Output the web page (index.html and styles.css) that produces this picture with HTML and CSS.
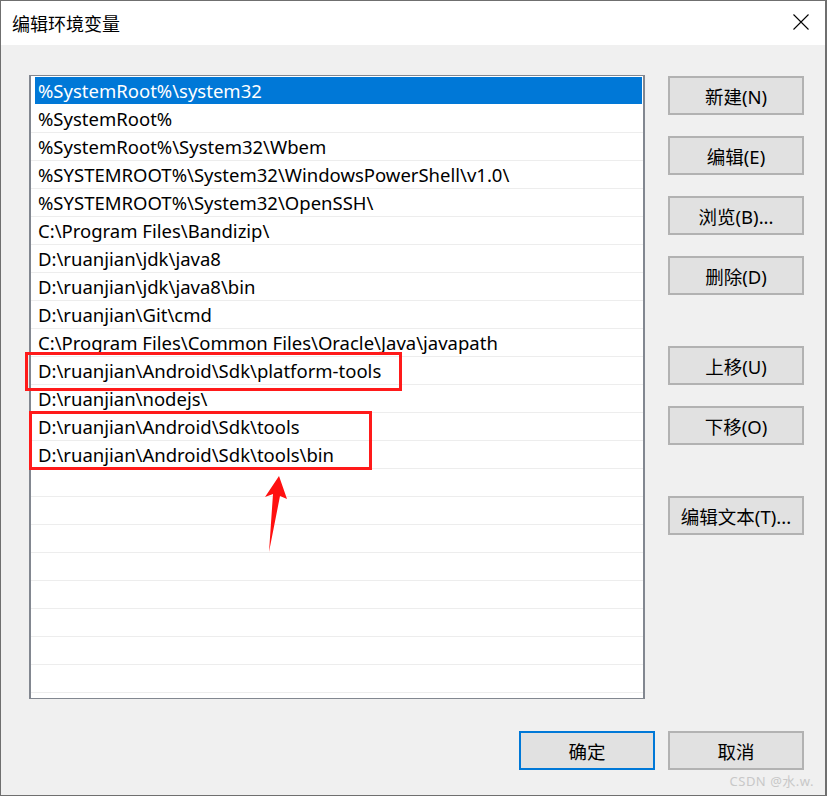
FILE: index.html
```html
<!DOCTYPE html>
<html lang="zh-CN">
<head>
<meta charset="utf-8">
<title>编辑环境变量</title>
<link rel="stylesheet" href="styles.css">
</head>
<body>
<div class="window">
  <div class="titlebar">
    <span class="title">编辑环境变量</span>
    <svg class="close" width="16" height="16" viewBox="0 0 16 16"><path d="M0.5 0.5 L15.5 15.5 M15.5 0.5 L0.5 15.5" stroke="#000" stroke-width="1.1" fill="none"/></svg>
  </div>
  <div class="client">
    <div class="main">
      <div class="listbox">
        <div class="row sel"><div class="cell">%SystemRoot%\system32</div></div>
        <div class="row"><div class="cell">%SystemRoot%</div></div>
        <div class="row"><div class="cell">%SystemRoot%\System32\Wbem</div></div>
        <div class="row"><div class="cell">%SYSTEMROOT%\System32\WindowsPowerShell\v1.0\</div></div>
        <div class="row"><div class="cell">%SYSTEMROOT%\System32\OpenSSH\</div></div>
        <div class="row"><div class="cell">C:\Program Files\Bandizip\</div></div>
        <div class="row"><div class="cell">D:\ruanjian\jdk\java8</div></div>
        <div class="row"><div class="cell">D:\ruanjian\jdk\java8\bin</div></div>
        <div class="row"><div class="cell">D:\ruanjian\Git\cmd</div></div>
        <div class="row"><div class="cell">C:\Program Files\Common Files\Oracle\Java\javapath</div></div>
        <div class="row"><div class="cell">D:\ruanjian\Android\Sdk\platform-tools</div></div>
        <div class="row"><div class="cell">D:\ruanjian\nodejs\</div></div>
        <div class="row"><div class="cell">D:\ruanjian\Android\Sdk\tools</div></div>
        <div class="row"><div class="cell">D:\ruanjian\Android\Sdk\tools\bin</div></div>
        <div class="row"><div class="cell"></div></div>
        <div class="row"><div class="cell"></div></div>
        <div class="row"><div class="cell"></div></div>
        <div class="row"><div class="cell"></div></div>
        <div class="row"><div class="cell"></div></div>
        <div class="row"><div class="cell"></div></div>
        <div class="row"><div class="cell"></div></div>
        <div class="row"><div class="cell"></div></div>
        <div class="row"><div class="cell"></div></div>
      </div>
      <div class="side">
        <div class="group">
          <button class="btn">新建(N)</button>
          <button class="btn">编辑(E)</button>
          <button class="btn">浏览(B)...</button>
          <button class="btn">删除(D)</button>
        </div>
        <div class="group">
          <button class="btn">上移(U)</button>
          <button class="btn">下移(O)</button>
        </div>
        <div class="group">
          <button class="btn">编辑文本(T)...</button>
        </div>
      </div>
    </div>
    <div class="footer">
      <button class="btn default">确定</button>
      <button class="btn">取消</button>
    </div>
  </div>
  <div class="mark mark1"></div>
  <div class="mark mark2"></div>
  <svg class="arrow" width="30" height="80" viewBox="0 0 30 80"><polygon points="15,0 23,23 16,20 5,76 9,18 1,21" fill="#ff1010"/></svg>
  <div class="watermark">CSDN @水.w.</div>
</div>
</body>
</html>
```
FILE: styles.css
```css
html, body {
  margin: 0;
  padding: 0;
}
body {
  width: 827px;
  height: 796px;
  overflow: hidden;
  font-family: "Noto Sans", "Noto Sans CJK SC", sans-serif;
  font-size: 18.5px;
  color: #000;
}
.window {
  position: relative;
  box-sizing: border-box;
  width: 827px;
  height: 796px;
  border: 1px solid #6f6f6f;
  border-right-width: 2px;
  background: #f0f0f0;
  display: flex;
  flex-direction: column;
}
.titlebar {
  height: 44px;
  background: #fff;
  display: flex;
  align-items: center;
  justify-content: space-between;
  padding: 0 16px 0 11px;
}
.title {
  font-family: "Noto Sans CJK SC", sans-serif;
  font-size: 18px;
  line-height: 20px;
  margin-top: -1px;
}
.close {
  display: block;
  margin-top: -2px;
}
.client {
  flex: 1;
  display: flex;
  flex-direction: column;
  padding: 30px 21px 0 28px;
}
.main {
  display: flex;
  gap: 23px;
}
.listbox {
  box-sizing: border-box;
  width: 616px;
  height: 624px;
  border: 2px solid #828790;
  border-top-width: 1px;
  border-bottom-width: 1px;
  background: #fff;
  overflow: hidden;
  padding-top: 1px;
}
.row {
  height: 27px;
  border-bottom: 1px solid #ededed;
}
.cell {
  height: 27px;
  margin: 0 1px 0 4px;
  padding-left: 3px;
  line-height: 27px;
  white-space: nowrap;
  overflow: hidden;
}
.row.sel .cell {
  background: #0078d7;
  color: #fff;
}
.row.sel {
  border-bottom-color: #fff;
}
.side {
  display: flex;
  flex-direction: column;
  gap: 51px;
  padding-top: 1px;
}
.group {
  display: flex;
  flex-direction: column;
  gap: 21px;
}
.btn {
  box-sizing: border-box;
  width: 136px;
  height: 39px;
  background: #e1e1e1;
  border: 2px solid #b2b2b2;
  font-family: "Noto Sans", "Noto Sans CJK SC", sans-serif;
  font-size: 18.5px;
  color: #000;
  padding: 0;
  display: flex;
  align-items: center;
  justify-content: center;
}
.btn.default {
  border-color: #0078d7;
}
.footer {
  display: flex;
  justify-content: flex-end;
  gap: 13px;
  margin-top: 32px;
}
.mark {
  position: absolute;
  box-sizing: border-box;
  border: 3px solid #ff1a1a;
}
.mark1 {
  left: 24px;
  top: 351px;
  width: 377px;
  height: 39px;
}
.mark2 {
  left: 28px;
  top: 410px;
  width: 343px;
  height: 59px;
}
.arrow {
  position: absolute;
  left: 263px;
  top: 475px;
}
.watermark {
  position: absolute;
  right: 11px;
  bottom: 5px;
  font-family: "Noto Sans", "Noto Sans CJK SC", sans-serif;
  font-size: 13px;
  color: #c8c8c8;
  letter-spacing: 0.5px;
}
```
